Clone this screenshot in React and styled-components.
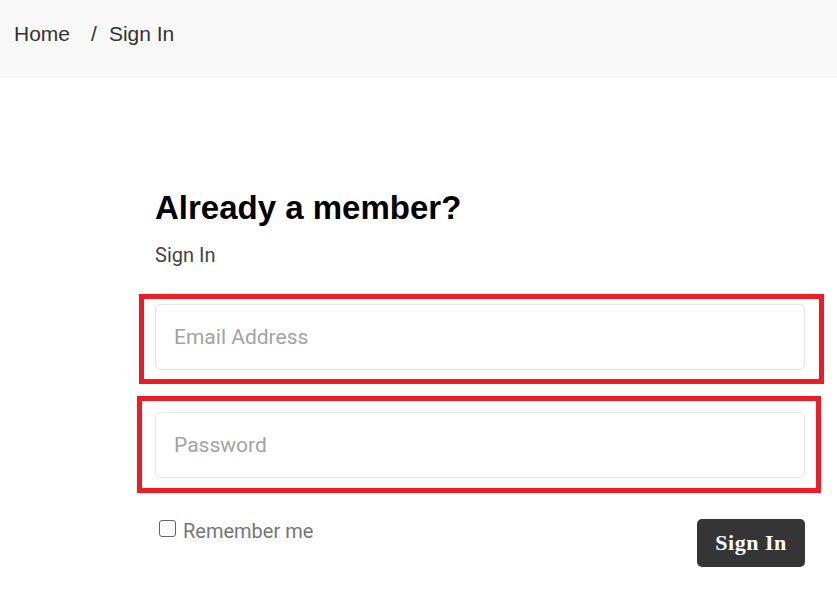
import React from 'react';
import styled, { createGlobalStyle } from 'styled-components';

const Global = createGlobalStyle`
  html, body { margin: 0; padding: 0; background: #fff; }
  body { font-family: "Liberation Sans", Arial, sans-serif; }
  * { box-sizing: border-box; }
`;

const Crumbs = styled.nav`
  height: 78px;
  background: #f8f8f8;
  display: flex;
  align-items: center;
  padding: 0 0 10px 14px;
  font-family: "Liberation Sans", Arial, sans-serif;
  font-size: 21px;
  color: #333;
`;

const Sep = styled.span`
  margin: 0 12px 0 21px;
`;

const Main = styled.main`
  padding: 110px 0 40px 155px;
`;

const Form = styled.form`
  width: 650px;
  display: flex;
  flex-direction: column;
`;

const Title = styled.h2`
  margin: 0;
  font-family: "Liberation Sans", Arial, sans-serif;
  font-weight: 700;
  font-size: 33px;
  line-height: 40px;
  color: #000;
`;

const Sub = styled.p`
  margin: 15px 0 0;
  font-family: Roboto, "Liberation Sans", sans-serif;
  font-size: 20px;
  line-height: 24px;
  color: #444;
`;

// red markup frame around the field
const Highlight = styled.div`
  position: relative;
  margin-top: ${p => p.$mt}px;
  &::after {
    content: '';
    position: absolute;
    top: ${p => p.$t}px;
    left: ${p => p.$l}px;
    right: ${p => p.$r}px;
    bottom: ${p => p.$b}px;
    border: 5px solid #ed1c24;
    pointer-events: none;
  }
`;

const Field = styled.input`
  display: block;
  width: 100%;
  height: 66px;
  padding: 0 18px;
  border: 1px solid #e6e6e6;
  border-radius: 5px;
  font-family: Roboto, "Liberation Sans", sans-serif;
  font-size: 21px;
  color: #333;
  outline: none;
  &::placeholder { color: #a3a3a3; }
`;

const Row = styled.div`
  margin-top: 41px;
  display: flex;
  justify-content: space-between;
  align-items: flex-start;
`;

const Remember = styled.label`
  display: flex;
  align-items: flex-start;
  margin-left: 4px;
  font-family: Roboto, "Liberation Sans", sans-serif;
  font-size: 20px;
  line-height: 24px;
  color: #777;
`;

const Box = styled.span`
  width: 17px;
  height: 17px;
  margin-top: 1px;
  margin-right: 7px;
  border: 1.5px solid #666;
  border-radius: 3px;
  background: #fff;
`;

const Button = styled.button`
  width: 108px;
  height: 48px;
  border: none;
  border-radius: 5px;
  background: #353535;
  color: #fff;
  font-family: "Liberation Serif", "Times New Roman", serif;
  font-weight: 700;
  font-size: 22px;
  letter-spacing: 0.5px;
  cursor: pointer;
`;

export default function App() {
  return (
    <>
      <Global />
      <Crumbs>
        <span>Home</span>
        <Sep>/</Sep>
        <span>Sign In</span>
      </Crumbs>
      <Main>
        <Form onSubmit={e => e.preventDefault()}>
          <Title>Already a member?</Title>
          <Sub>Sign In</Sub>
          <Highlight $mt={37} $t={-10} $l={-16} $r={-19} $b={-14}>
            <Field type="email" placeholder="Email Address" />
          </Highlight>
          <Highlight $mt={42} $t={-16} $l={-18} $r={-16} $b={-15}>
            <Field type="password" placeholder="Password" />
          </Highlight>
          <Row>
            <Remember>
              <Box />
              Remember me
            </Remember>
            <Button type="submit">Sign In</Button>
          </Row>
        </Form>
      </Main>
    </>
  );
}
